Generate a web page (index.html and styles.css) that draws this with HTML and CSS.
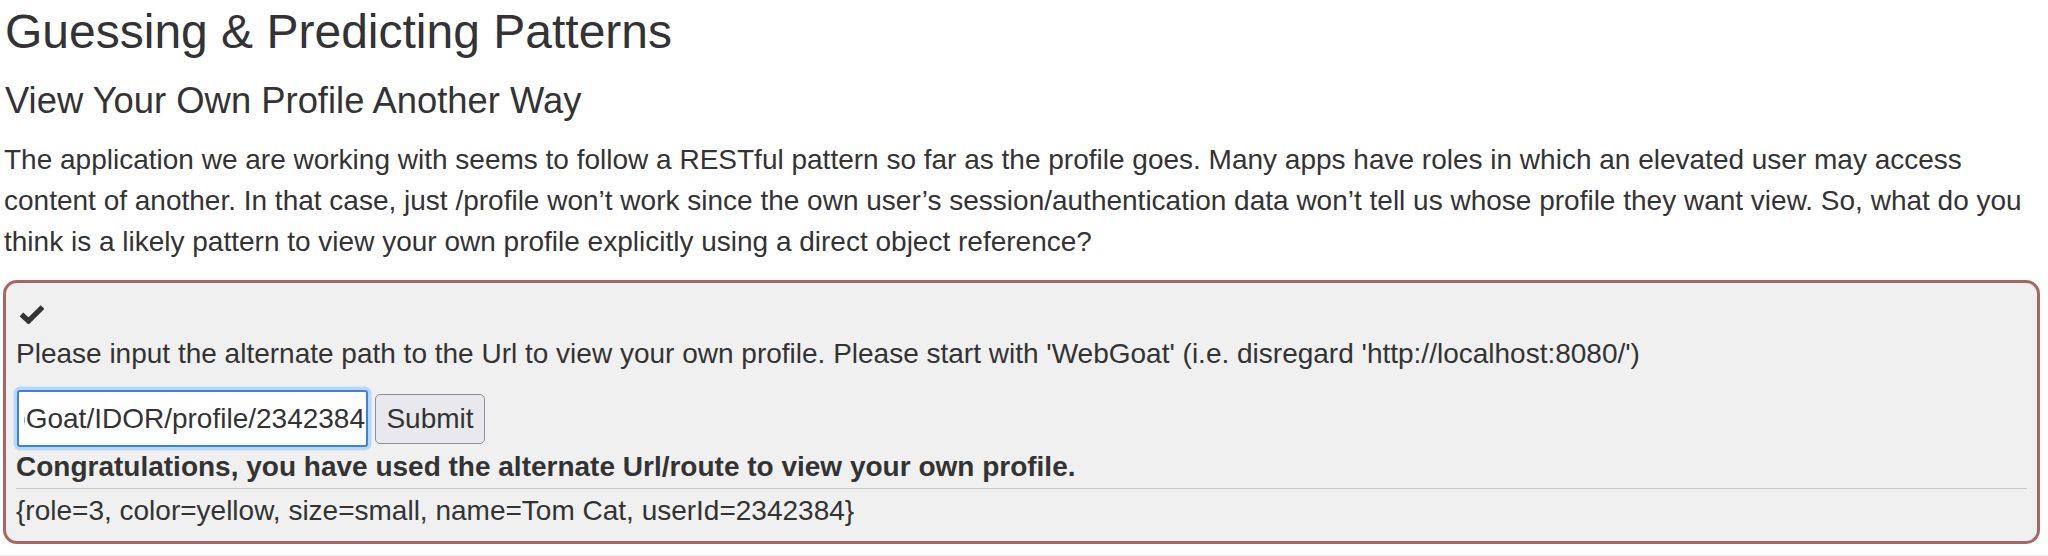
FILE: index.html
```html
<!DOCTYPE html>
<html>
<head>
<meta charset="utf-8">
<link rel="stylesheet" href="styles.css">
</head>
<body>
<div class="page">
  <h1 class="title">Guessing &amp; Predicting Patterns</h1>
  <h2 class="subtitle">View Your Own Profile Another Way</h2>
  <p class="intro">The application we are working with seems to follow a RESTful pattern so far as the profile goes. Many apps have roles in which an elevated user may access content of another. In that case, just /profile won’t work since the own user’s session/authentication data won’t tell us whose profile they want view. So, what do you think is a likely pattern to view your own profile explicitly using a direct object reference?</p>
  <div class="attack">
    <svg class="check" width="24" height="20" viewBox="0 0 24 20"><path d="M1.5 10.5 L8.5 17 L22.5 3" fill="none" stroke="#333" stroke-width="5.2" stroke-linejoin="miter"/></svg>
    <div class="prompt">Please input the alternate path to the Url to view your own profile. Please start with 'WebGoat' (i.e. disregard 'http://localhost:8080/')</div>
    <div class="form-row">
      <div class="field"><div class="field-clip"><span class="field-value">WebGoat/IDOR/profile/2342384</span></div></div>
      <button class="submit" type="button">Submit</button>
    </div>
    <div class="feedback">Congratulations, you have used the alternate Url/route to view your own profile.</div>
    <div class="output">{role=3, color=yellow, size=small, name=Tom Cat, userId=2342384}</div>
  </div>
  <div class="strip"></div>
</div>
</body>
</html>
```
FILE: styles.css
```css
html, body {
  margin: 0;
  padding: 0;
  background: #fff;
}
body {
  font-family: "Liberation Sans", Arial, sans-serif;
  color: #333;
  width: 2048px;
  height: 556px;
  overflow: hidden;
}
.page {
  padding: 0 8px 0 3px;
  display: flex;
  flex-direction: column;
}
.title {
  font-size: 48px;
  font-weight: normal;
  line-height: 64px;
  margin: 0 0 0 2px;
}
.subtitle {
  font-size: 36.4px;
  font-weight: normal;
  line-height: 46px;
  margin: 14px 0 0 2px;
}
.intro {
  font-size: 28px;
  line-height: 41px;
  margin: 15px 0 0 1px;
}
.attack {
  margin-top: 18px;
  border: 3px solid #a86767;
  border-radius: 14px;
  background: #f0f0f0;
  padding: 21px 10px 8px 10px;
  display: flex;
  flex-direction: column;
  align-items: flex-start;
}
.check {
  display: block;
  margin: 0 0 0 4px;
}
.prompt {
  font-size: 28px;
  line-height: 40px;
  margin-top: 10px;
}
.form-row {
  display: flex;
  align-items: center;
  gap: 7px;
  margin-top: 16px;
}
.field {
  width: 351px;
  height: 57px;
  box-sizing: border-box;
  border: 2.5px solid #3b82e0;
  border-radius: 3px;
  background: #fff;
  box-shadow: 0 0 0 3.5px #bcd7f6;
  display: flex;
  align-items: center;
  padding: 0 1px 0 5px;
  margin: 0 0 1px 1px;
  font-size: 28px;
}
.field-clip {
  flex: 1;
  display: flex;
  justify-content: flex-end;
  overflow: hidden;
}
.field-value {
  white-space: nowrap;
  flex: none;
}
.submit {
  font-family: "Liberation Sans", Arial, sans-serif;
  font-size: 28px;
  color: #333;
  background: #e9e9ed;
  border: 1.5px solid #8f8f9d;
  border-radius: 5px;
  height: 50px;
  width: 110px;
  padding: 0;
}
.feedback {
  font-size: 28px;
  font-weight: bold;
  line-height: 38px;
  align-self: stretch;
  border-bottom: 1.5px solid #c8c8c8;
  padding-bottom: 2px;
}
.output {
  font-size: 28px;
  line-height: 44px;
}
.strip {
  margin-top: 11px;
  height: 4px;
  background: #ebebef;
  margin-left: -3px;
  margin-right: -8px;
}
```
